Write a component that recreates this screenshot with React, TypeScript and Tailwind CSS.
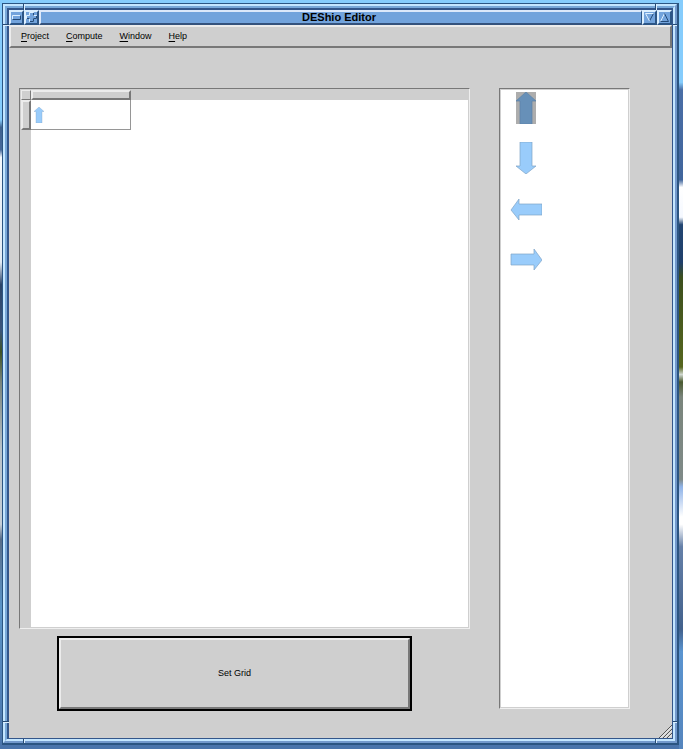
import { clsx } from "clsx";

type Direction = "up" | "down" | "left" | "right";

const menus = ["Project", "Compute", "Window", "Help"];
const directions: Direction[] = ["up", "down", "left", "right"];

const arrowShapes: Record<Direction, string> = {
    up: "16,0 26,9 22,9 22,32 10,32 10,9 6,9",
    down: "10,0 22,0 22,24 26,24 16,32 6,24 10,24",
    left: "1,18 9,7 9,12 32,12 32,23 9,23 9,28",
    right: "32,18 24,7 24,12 1,12 1,23 24,23 24,28",
};

const raised = "border-t-[#ececec] border-l-[#ececec] border-r-[#787878] border-b-[#787878]";
const sunken = "border border-t-[#787878] border-l-[#787878] border-r-[#efefef] border-b-[#efefef]";
const frameButton =
    "flex h-[15px] w-[15px] shrink-0 items-center justify-center border-2 border-t-[#dcefff] border-l-[#dcefff] border-r-[#2c5585] border-b-[#2c5585] bg-[#72a3dc]";

const Arrow = ({ direction, selected = false, className }: { direction: Direction; selected?: boolean; className: string }) => (
    <svg viewBox="0 0 32 32" className={className} aria-hidden="true">
        {selected && <rect x="6" width="20" height="32" fill="#adadad" />}
        <polygon
            points={arrowShapes[direction]}
            fill={selected ? "#6790b8" : "#99ccfb"}
            stroke={selected ? "#5d83a8" : "#7fa3c6"}
            strokeWidth="0.7"
        />
    </svg>
);

const TitleBar = () => (
    <header className="flex h-[15px] bg-[#72a3dc]">
        <button className={frameButton} aria-label="Window menu">
            <svg width="11" height="11" viewBox="0 0 11 11" className="shrink-0">
                <path d="M1.500 7.500V3.500H9.500" fill="none" stroke="#dcefff" />
                <path d="M1.500 7.500H9.500V3.500" fill="none" stroke="#234a78" />
            </svg>
        </button>
        <button className={frameButton} aria-label="Pin window">
            <svg width="11" height="11" viewBox="0 0 11 11" className="shrink-0">
                <path d="M3.500 0.500H7.500V3.500H10.500V6.500H7.500V9.500H3.500V6.500H0.500V3.500H3.500Z" fill="#72a3dc" stroke="#dcefff" />
                <path d="M7.500 1V3.500M10.500 4V6.500H7.500V9.500H4M3.500 6.500H1" fill="none" stroke="#234a78" />
            </svg>
        </button>
        <h1 className="flex min-w-0 flex-1 items-center justify-center border-t-2 border-b-2 border-l-2 border-r border-t-[#dce8fa] border-l-[#dce8fa] border-r-[#2c5585] border-b-[#34527c] pr-1 text-[11px] leading-[11px] font-bold text-black">
            DEShio Editor
        </h1>
        <button className={frameButton} aria-label="Minimize">
            <svg width="11" height="11" viewBox="0 0 11 11" className="shrink-0">
                <path d="M9.500 1.500L5.500 9" fill="none" stroke="#234a78" />
                <path d="M5.500 9L1.500 1.500H9.500" fill="none" stroke="#dcefff" />
            </svg>
        </button>
        <button className={frameButton} aria-label="Maximize">
            <svg width="11" height="11" viewBox="0 0 11 11" className="shrink-0">
                <path d="M1.500 9.500L5.500 1.500" fill="none" stroke="#dcefff" />
                <path d="M5.500 1.500L9.500 9.500H1.500" fill="none" stroke="#234a78" />
            </svg>
        </button>
    </header>
);

const MenuBar = () => (
    <nav className={clsx("flex h-[23px] items-center gap-[17px] border-2 pb-0.5 pl-2.5", raised)}>
        {menus.map((name) => (
            <button key={name} className="text-[9px] leading-3">
                <span className="underline underline-offset-2">{name[0]}</span>
                {name.slice(1)}
            </button>
        ))}
    </nav>
);

const GridView = () => (
    <div className={clsx("flex flex-1 flex-col", sunken)}>
        <div className="flex flex-1 flex-col border border-[#cfcfcf] bg-white">
            <table className="w-full table-fixed border-separate border-spacing-0" aria-label="Grid">
                <thead>
                    <tr className="h-2.5">
                        <th className={clsx("w-2.5 border bg-[#cfcfcf] p-0", raised)} />
                        <th className={clsx("w-[100px] border-2 bg-[#cfcfcf] p-0", raised)} />
                        <th className="bg-[#cfcfcf] p-0" />
                    </tr>
                </thead>
                <tbody>
                    <tr className="h-[30px]">
                        <th className={clsx("border-2 bg-[#cfcfcf] p-0", raised)} />
                        <td className="border-r border-b border-[#969696] p-0">
                            <Arrow direction="up" className="size-4" />
                        </td>
                        <td className="p-0" />
                    </tr>
                </tbody>
            </table>
            <div className="flex-1 border-l-[10px] border-[#cfcfcf]" />
        </div>
    </div>
);

const Palette = () => (
    <aside className={clsx("mb-0.5 flex w-[131px] shrink-0", sunken)}>
        <div className="flex flex-1 flex-col items-start gap-[18px] border border-[#cfcfcf] bg-white pt-0.5 pl-[9px]">
            {directions.map((direction) => (
                <button key={direction} aria-label={direction} aria-pressed={direction === "up"}>
                    <Arrow direction={direction} selected={direction === "up"} className="block size-8" />
                </button>
            ))}
        </div>
    </aside>
);

// Grooves that split the resize corners from the sides of the frame
const FrameNotches = () => (
    <>
        <span className="absolute top-0 left-5 h-1.5 w-0.5 border-l border-[#244a74] bg-[#dcefff]" />
        <span className="absolute top-0 right-5 h-1.5 w-0.5 border-l border-[#244a74] bg-[#dcefff]" />
        <span className="absolute bottom-0 left-5 h-1 w-0.5 border-l border-[#244a74] bg-[#dcefff]" />
        <span className="absolute right-5 bottom-0 h-1 w-0.5 border-l border-[#244a74] bg-[#dcefff]" />
        <span className="absolute top-5 left-0 h-0.5 w-1.5 border-t border-[#244a74] bg-[#dcefff]" />
        <span className="absolute top-5 right-0 h-0.5 w-1 border-t border-[#244a74] bg-[#dcefff]" />
        <span className="absolute bottom-5 left-0 h-0.5 w-1.5 border-t border-[#244a74] bg-[#dcefff]" />
        <span className="absolute right-0 bottom-5 h-0.5 w-1 border-t border-[#244a74] bg-[#dcefff]" />
    </>
);

const App = () => {
    return (
        <div className="flex min-h-screen bg-[linear-gradient(#85ccfc_0%,#85ccfc_50%,#4a74ab_60%)] font-['Liberation_Sans',Arial,sans-serif] text-black">
            <div className="w-0.5 shrink-0 bg-[linear-gradient(#85ccfc_0%,#85ccfc_16%,#3f628f_17%,#46699a_20%,#f4f8fc_21%,#e4ecf4_35%,#2b4468_38%,#3b557c_44%,#3f5424_47%,#7a857c_51%,#b9c2c8_60%,#c5ced6_70%,#586d88_72%,#5a94c8_81%,#4a74ab_100%)]" />
            <div className="relative mt-[3px] mb-1 flex min-w-0 flex-1 flex-col border-t border-r-2 border-b-2 border-l border-[#2b5582]">
                <div className="flex flex-1 flex-col border-2 border-t-[#c4e6ff] border-r-[#7299cc] border-b-[#7299cc] border-l-[#c4e6ff]">
                    <div className="flex flex-1 flex-col border-2 border-t-[#78a8d8] border-r-[#c4e6ff] border-b-[#c4e6ff] border-l-[#78a8d8]">
                        <div className="flex flex-1 flex-col border-t-2 border-r border-b border-l-2 border-[#33568a] bg-[#cfcfcf]">
                            <TitleBar />
                            <MenuBar />
                            <main className="relative flex flex-1 gap-[29px] pt-10 pr-[42px] pb-[27px] pl-2.5">
                                <section className="flex min-w-0 flex-1 flex-col gap-[7px]">
                                    <GridView />
                                    <div className="flex pr-[58px] pl-[38px]">
                                        <button className="flex h-[75px] flex-1 border-2 border-black">
                                            <span className={clsx("flex flex-1 items-center justify-center self-stretch border-2 pb-0.5 text-[9px] leading-3", raised)}>
                                                Set Grid
                                            </span>
                                        </button>
                                    </div>
                                </section>
                                <Palette />
                                <svg className="absolute right-0 bottom-0" width="13" height="13" viewBox="0 0 13 13">
                                    <path d="M0 13L13 0M4 13L13 4M8 13L13 8" stroke="#555" />
                                    <path d="M1.500 13L13 1.500M5.500 13L13 5.500M9.500 13L13 9.500" stroke="#f2f2f2" />
                                </svg>
                            </main>
                        </div>
                    </div>
                </div>
                <FrameNotches />
            </div>
            <div className="w-1 shrink-0 bg-[linear-gradient(#85ccfc_0%,#85ccfc_11%,#4a6ea6_12%,#40659c_24%,#ffffff_25%,#f4f8ff_29%,#234672_30%,#1f3f6b_35%,#3c4f1e_37%,#56661f_49%,#d0d8d0_50%,#4a5a30_51%,#7a857c_53%,#7f8a88_64%,#8fb3e8_65%,#ffffff_69%,#ffffff_70%,#6580a8_73%,#42618c_84%,#5a94d0_87%,#5585bd_100%)]" />
        </div>
    );
};

export default App;
